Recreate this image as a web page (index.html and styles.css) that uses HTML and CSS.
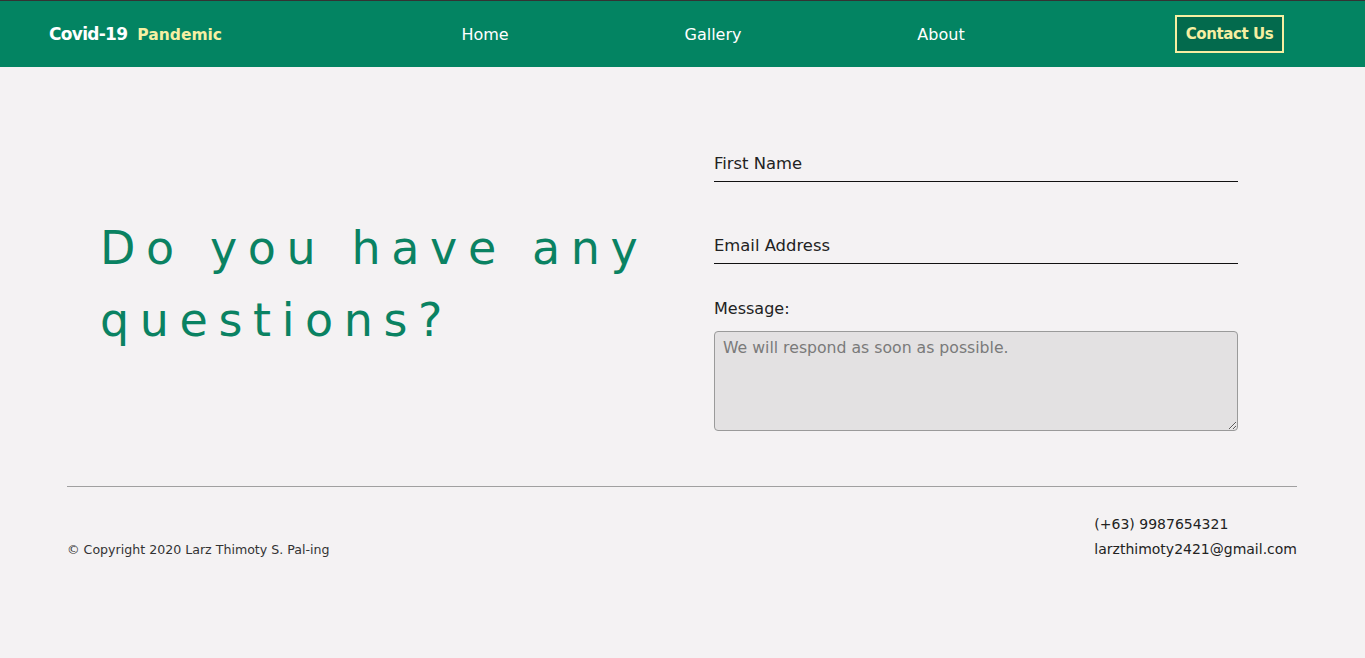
FILE: index.html
```html
<!DOCTYPE html>
<html lang="en">
<head>
<meta charset="utf-8">
<title>Contact Us - Covid-19 Pandemic</title>
<link rel="stylesheet" href="styles.css">
</head>
<body>
<header class="topbar">
  <div class="logo"><span class="logo-main">Covid-19</span><span class="logo-sub">Pandemic</span></div>
  <nav class="nav">
    <a class="nav-link" href="#">Home</a>
    <a class="nav-link" href="#">Gallery</a>
    <a class="nav-link" href="#">About</a>
  </nav>
  <a class="contact-btn" href="#">Contact Us</a>
</header>
<main class="contact">
  <div class="intro">
    <h1 class="headline">Do you have any<br>questions?</h1>
  </div>
  <form class="form">
    <div class="field"><label class="field-label">First Name</label></div>
    <div class="field field-second"><label class="field-label">Email Address</label></div>
    <label class="msg-label">Message:</label>
    <textarea class="msg" placeholder="We will respond as soon as possible."></textarea>
  </form>
</main>
<footer class="footer">
  <p class="copy">© Copyright 2020 Larz Thimoty S. Pal-ing</p>
  <div class="info">
    <p class="info-line">(+63) 9987654321</p>
    <p class="info-line">larzthimoty2421@gmail.com</p>
  </div>
</footer>
</body>
</html>
```
FILE: styles.css
```css
* { box-sizing: border-box; }
html, body { margin: 0; padding: 0; }
body {
  background: #f4f2f3;
  font-family: "DejaVu Sans", "Open Sans", sans-serif;
  color: #222;
}
.topbar {
  display: flex;
  align-items: center;
  height: 67px;
  border-top: 1px solid #333;
  background: #038462;
  padding: 0 81px 0 49px;
}
.logo {
  width: 322px;
  display: flex;
  align-items: baseline;
  gap: 10px;
}
.logo-main { color: #fff; font-size: 17px; font-weight: 600; letter-spacing: -0.7px; }
.logo-sub { color: #f6efa2; font-size: 15.5px; font-weight: 600; letter-spacing: 0; }
.nav { display: flex; }
.nav-link {
  width: 228px;
  text-align: center;
  color: #fff;
  text-decoration: none;
  font-size: 16px;
}
.contact-btn {
  margin-left: 120px;
  width: 109px;
  height: 38px;
  display: flex;
  align-items: center;
  justify-content: center;
  border: 2px solid #f6efa2;
  background: #036a4d;
  color: #f6efa2;
  font-weight: 600;
  font-size: 15px;
  letter-spacing: -0.4px;
  text-decoration: none;
}
.contact {
  display: flex;
  align-items: center;
  padding: 87px 127px 0 100px;
}
.intro { width: 614px; padding-bottom: 18px; }
.headline {
  margin: 0;
  color: #0a8262;
  font-weight: 400;
  font-size: 46px;
  line-height: 72px;
  letter-spacing: 10.6px;
}
.form { width: 524px; display: flex; flex-direction: column; }
.field {
  border-bottom: 1px solid #111;
  padding-bottom: 8px;
  font-size: 16.4px;
  line-height: 19px;
}
.field-second { margin-top: 54px; }
.field-label { color: #222; }
.msg-label { margin-top: 35px; font-size: 16px; line-height: 19px; color: #222; }
.msg {
  margin-top: 13px;
  height: 100px;
  width: 100%;
  background: #e3e1e2;
  border: 1px solid #9a9a9a;
  border-radius: 4px;
  padding: 6px 8px;
  font-family: "DejaVu Sans", "Open Sans", sans-serif;
  font-size: 15.7px;
  color: #333;
  resize: vertical;
}
.msg::placeholder { color: #7a7a7a; }
.footer {
  margin: 55px 68px 0 67px;
  border-top: 1px solid #a0a0a0;
  display: flex;
  justify-content: space-between;
  align-items: flex-end;
  padding-top: 25px;
}
.copy { margin: 0; font-size: 12.6px; line-height: 25px; color: #333; }
.info { display: flex; flex-direction: column; }
.info-line { margin: 0; font-size: 14px; line-height: 25px; color: #222; }
```
